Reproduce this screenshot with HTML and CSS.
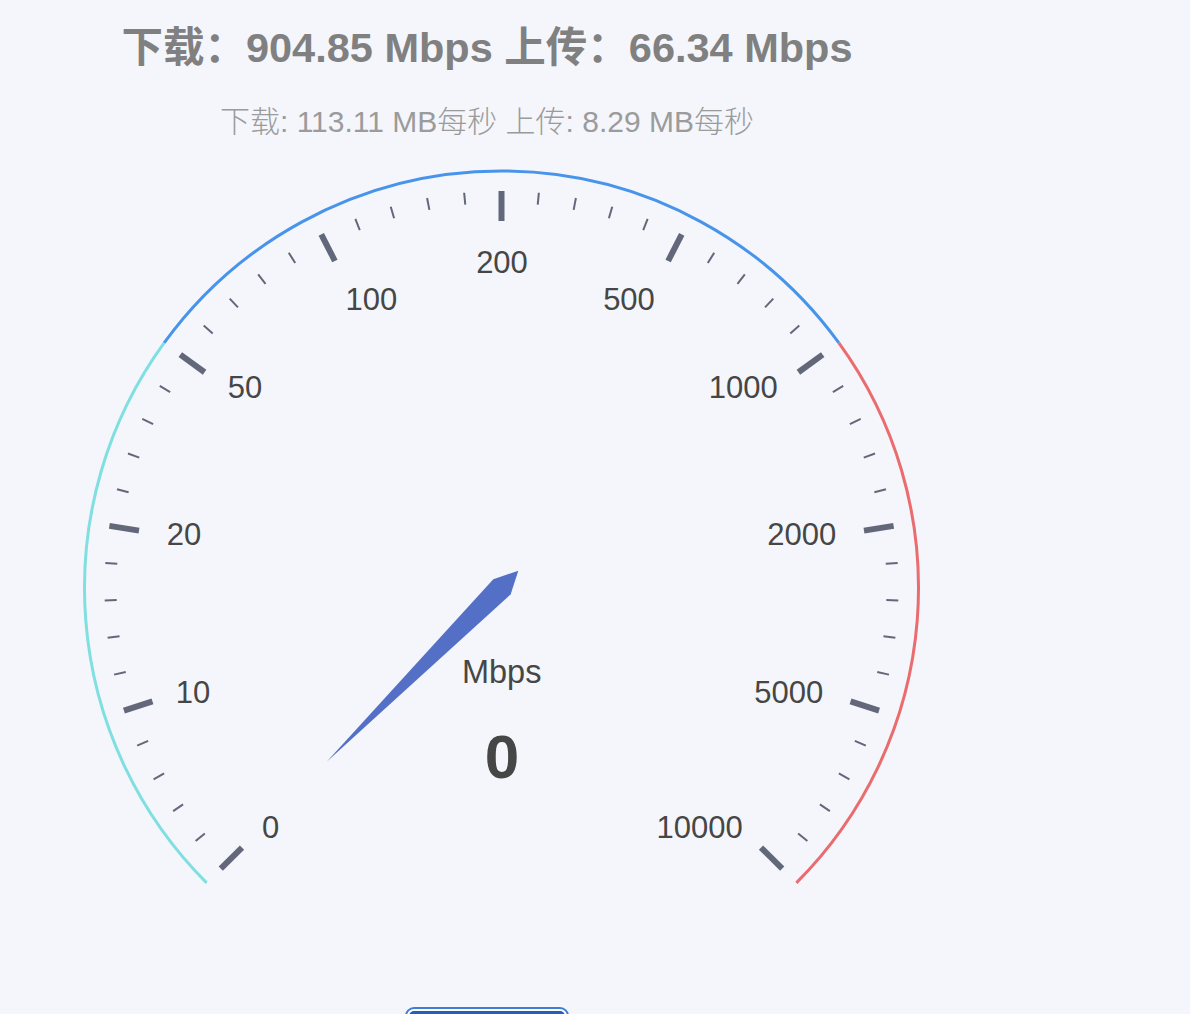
FILE: index.html
```html
<!DOCTYPE html>
<html lang="zh-CN">
<head>
<meta charset="utf-8">
<title>测速</title>
<link rel="stylesheet" href="styles.css">
</head>
<body>
<div class="header">
  <h1 class="title">下载：904.85 Mbps 上传：66.34 Mbps</h1>
  <p class="subtitle">下载: 113.11 MB每秒 上传: 8.29 MB每秒</p>
</div>
<svg class="gauge" width="1003" height="850" viewBox="0 150 1003 850" xmlns="http://www.w3.org/2000/svg">
  <defs>
    <line id="major" x1="501.5" y1="191" x2="501.5" y2="221" class="major"/>
    <line id="minor" x1="501.5" y1="191" x2="501.5" y2="203" class="minor"/>
  </defs>
  <path class="arc arc-a" d="M 206.64 882.86 A 417 417 0 0 1 164.14 342.89"/>
  <path class="arc arc-b" d="M 164.14 342.89 A 417 417 0 0 1 838.86 342.89"/>
  <path class="arc arc-c" d="M 838.86 342.89 A 417 417 0 0 1 796.36 882.86"/>

  <use href="#major" transform="rotate(-135 501.5 588)"/>
  <use href="#minor" transform="rotate(-129.6 501.5 588)"/>
  <use href="#minor" transform="rotate(-124.2 501.5 588)"/>
  <use href="#minor" transform="rotate(-118.8 501.5 588)"/>
  <use href="#minor" transform="rotate(-113.4 501.5 588)"/>
  <use href="#major" transform="rotate(-108 501.5 588)"/>
  <use href="#minor" transform="rotate(-102.6 501.5 588)"/>
  <use href="#minor" transform="rotate(-97.2 501.5 588)"/>
  <use href="#minor" transform="rotate(-91.8 501.5 588)"/>
  <use href="#minor" transform="rotate(-86.4 501.5 588)"/>
  <use href="#major" transform="rotate(-81 501.5 588)"/>
  <use href="#minor" transform="rotate(-75.6 501.5 588)"/>
  <use href="#minor" transform="rotate(-70.2 501.5 588)"/>
  <use href="#minor" transform="rotate(-64.8 501.5 588)"/>
  <use href="#minor" transform="rotate(-59.4 501.5 588)"/>
  <use href="#major" transform="rotate(-54 501.5 588)"/>
  <use href="#minor" transform="rotate(-48.6 501.5 588)"/>
  <use href="#minor" transform="rotate(-43.2 501.5 588)"/>
  <use href="#minor" transform="rotate(-37.8 501.5 588)"/>
  <use href="#minor" transform="rotate(-32.4 501.5 588)"/>
  <use href="#major" transform="rotate(-27 501.5 588)"/>
  <use href="#minor" transform="rotate(-21.6 501.5 588)"/>
  <use href="#minor" transform="rotate(-16.2 501.5 588)"/>
  <use href="#minor" transform="rotate(-10.8 501.5 588)"/>
  <use href="#minor" transform="rotate(-5.4 501.5 588)"/>
  <use href="#major" transform="rotate(0 501.5 588)"/>
  <use href="#minor" transform="rotate(5.4 501.5 588)"/>
  <use href="#minor" transform="rotate(10.8 501.5 588)"/>
  <use href="#minor" transform="rotate(16.2 501.5 588)"/>
  <use href="#minor" transform="rotate(21.6 501.5 588)"/>
  <use href="#major" transform="rotate(27 501.5 588)"/>
  <use href="#minor" transform="rotate(32.4 501.5 588)"/>
  <use href="#minor" transform="rotate(37.8 501.5 588)"/>
  <use href="#minor" transform="rotate(43.2 501.5 588)"/>
  <use href="#minor" transform="rotate(48.6 501.5 588)"/>
  <use href="#major" transform="rotate(54 501.5 588)"/>
  <use href="#minor" transform="rotate(59.4 501.5 588)"/>
  <use href="#minor" transform="rotate(64.8 501.5 588)"/>
  <use href="#minor" transform="rotate(70.2 501.5 588)"/>
  <use href="#minor" transform="rotate(75.6 501.5 588)"/>
  <use href="#major" transform="rotate(81 501.5 588)"/>
  <use href="#minor" transform="rotate(86.4 501.5 588)"/>
  <use href="#minor" transform="rotate(91.8 501.5 588)"/>
  <use href="#minor" transform="rotate(97.2 501.5 588)"/>
  <use href="#minor" transform="rotate(102.6 501.5 588)"/>
  <use href="#major" transform="rotate(108 501.5 588)"/>
  <use href="#minor" transform="rotate(113.4 501.5 588)"/>
  <use href="#minor" transform="rotate(118.8 501.5 588)"/>
  <use href="#minor" transform="rotate(124.2 501.5 588)"/>
  <use href="#minor" transform="rotate(129.6 501.5 588)"/>
  <use href="#major" transform="rotate(135 501.5 588)"/>

  <text class="tick-label" x="270.5" y="838.3">0</text>
  <text class="tick-label" x="193" y="703.3">10</text>
  <text class="tick-label" x="184" y="545">20</text>
  <text class="tick-label" x="245" y="398.3">50</text>
  <text class="tick-label" x="371.3" y="310">100</text>
  <text class="tick-label" x="502" y="272.7">200</text>
  <text class="tick-label" x="629" y="310">500</text>
  <text class="tick-label" x="743.3" y="398.3">1000</text>
  <text class="tick-label" x="801.7" y="545">2000</text>
  <text class="tick-label" x="788.7" y="703.3">5000</text>
  <text class="tick-label" x="699.7" y="838.3">10000</text>

  <polygon class="pointer" points="326.7,761.7 493.3,579.3 518.3,570.7 510.7,594.3"/>

  <text class="unit" x="501.7" y="683.3">Mbps</text>
  <text class="value" x="502" y="778">0</text>
</svg>
<div class="actions">
  <button class="start-btn" type="button"></button>
</div>
</body>
</html>
```

FILE: styles.css
```css
html, body {
  margin: 0;
  padding: 0;
}

body {
  background: #f4f6fb;
  font-family: "Liberation Sans", "Noto Sans CJK SC", sans-serif;
  width: 1190px;
  height: 1014px;
  overflow: hidden;
}

.header {
  width: 974px;
  padding-top: 24px;
  text-align: center;
}

.title {
  margin: 0;
  font-size: 41.5px;
  line-height: 48px;
  font-weight: bold;
  color: #808080;
  white-space: nowrap;
}

.subtitle {
  margin: 33px 0 0;
  font-size: 30px;
  line-height: 34px;
  font-weight: 300;
  color: #9b9b9b;
  white-space: nowrap;
}

.gauge {
  display: block;
  margin-top: 11px;
}

.arc {
  fill: none;
  stroke-width: 3;
}

.arc-a { stroke: #80dfe0; }
.arc-b { stroke: #4894ea; }
.arc-c { stroke: #ea6c6f; }

.major {
  stroke: #63677a;
  stroke-width: 6;
}

.minor {
  stroke: #63677a;
  stroke-width: 2;
}

.tick-label {
  font-family: "Liberation Sans", sans-serif;
  font-size: 31px;
  fill: #464646;
  text-anchor: middle;
}

.pointer {
  fill: #5470c6;
}

.unit {
  font-family: "Liberation Sans", sans-serif;
  font-size: 32.5px;
  fill: #464646;
  text-anchor: middle;
}

.value {
  font-family: "Liberation Sans", sans-serif;
  font-size: 62px;
  font-weight: bold;
  fill: #464646;
  text-anchor: middle;
}

.actions {
  width: 974px;
  padding-top: 11px;
  text-align: center;
}

.start-btn {
  width: 156px;
  height: 48px;
  border: none;
  border-radius: 5px;
  background: #2a5cbe;
  box-shadow: 0 0 0 2px #ffffff, 0 0 0 4px #3b7fd6;
  padding: 0;
}
```
